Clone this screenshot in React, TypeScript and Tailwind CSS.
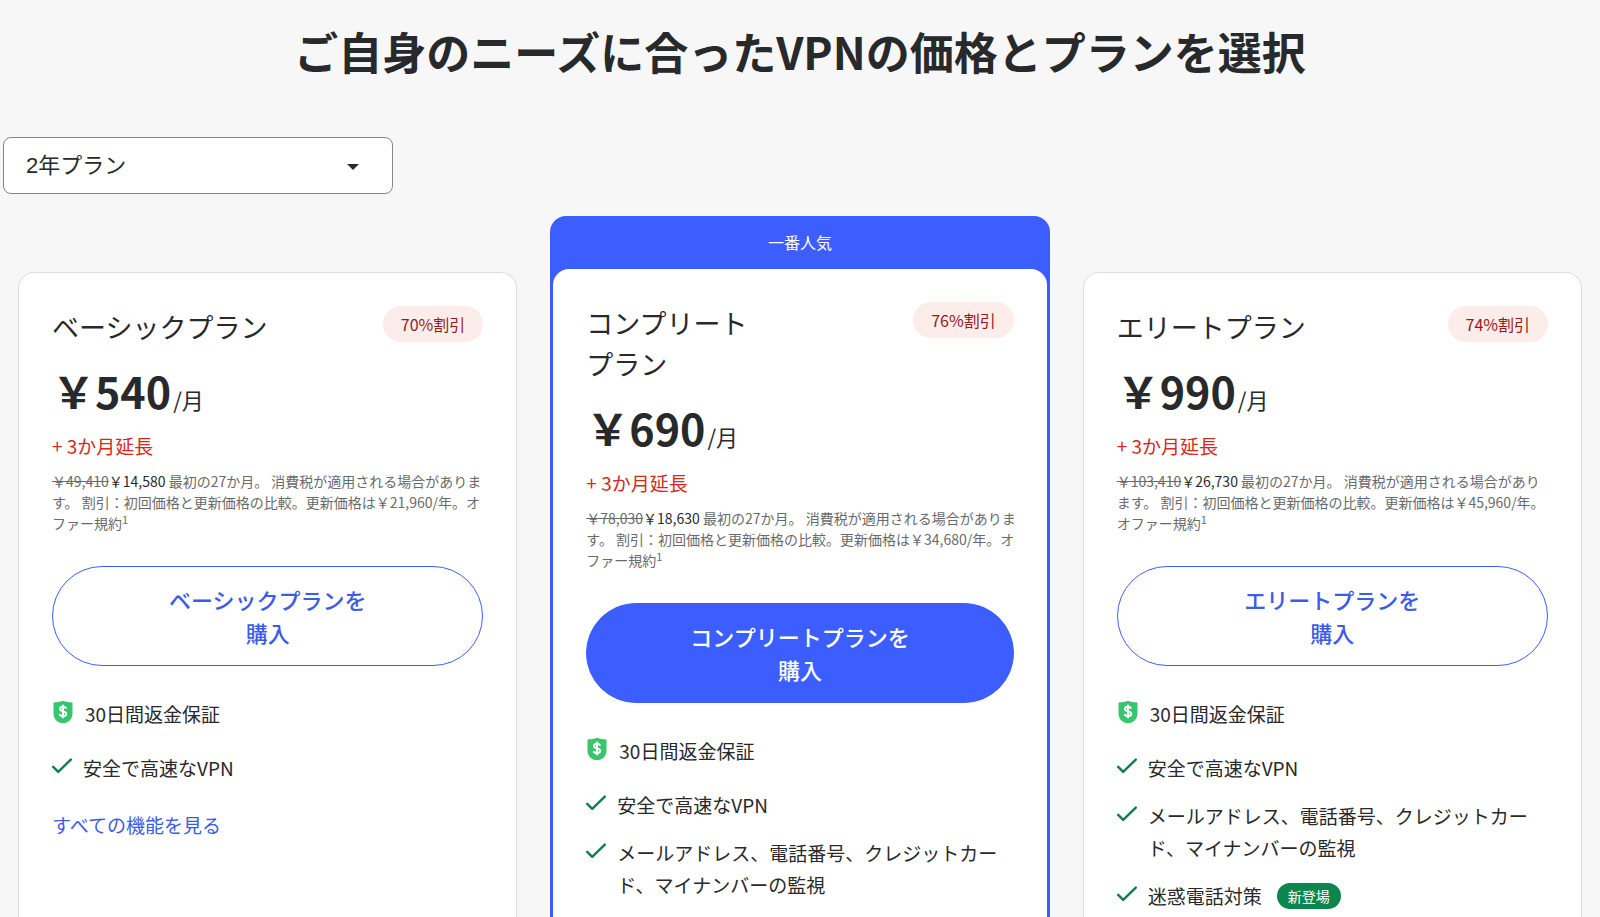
import React from 'react'

type Plan = {
  name: string[]
  discount: string
  price: string
  oldTotal: string
  total: string
  renewal: string
  cta: string
  features: { text: string; isNew?: boolean }[]
  popular?: boolean
  showAll?: boolean
}

const plans: Plan[] = [
  {
    name: ['ベーシックプラン'],
    discount: '70%割引',
    price: '￥540',
    oldTotal: '￥49,410',
    total: '￥14,580',
    renewal: '￥21,960',
    cta: 'ベーシックプランを',
    features: [{ text: '安全で高速なVPN' }],
    showAll: true,
  },
  {
    name: ['コンプリート', 'プラン'],
    discount: '76%割引',
    price: '￥690',
    oldTotal: '￥78,030',
    total: '￥18,630',
    renewal: '￥34,680',
    cta: 'コンプリートプランを',
    features: [
      { text: '安全で高速なVPN' },
      { text: 'メールアドレス、電話番号、クレジットカード、マイナンバーの監視' },
    ],
    popular: true,
  },
  {
    name: ['エリートプラン'],
    discount: '74%割引',
    price: '￥990',
    oldTotal: '￥103,410',
    total: '￥26,730',
    renewal: '￥45,960',
    cta: 'エリートプランを',
    features: [
      { text: '安全で高速なVPN' },
      { text: 'メールアドレス、電話番号、クレジットカード、マイナンバーの監視' },
      { text: '迷惑電話対策', isNew: true },
    ],
  },
]

function ShieldIcon() {
  return (
    <svg className="mt-0.5 h-6 w-[22px] shrink-0" viewBox="0 0 22 24" aria-hidden="true">
      <path d="M11 .8c2.800 1 5.800 1.600 9.500 1.700v11c0 5.600-4.200 9.700-9.500 9.700s-9.500-4.100-9.500-9.700v-11C5.200 2.400 8.200 1.800 11 .8z" fill="#39c56d" />
      <path
        d="M14 8.700c-.3-1.300-1.500-2-3-2-1.700 0-3 .8-3 2.300 0 3.300 6.200 1.500 6.200 4.800 0 1.500-1.400 2.400-3.200 2.400-1.700 0-3-.8-3.300-2.200M11 4.800v13.400"
        fill="none"
        stroke="#fff"
        strokeWidth="2"
      />
    </svg>
  )
}

function CheckIcon() {
  return (
    <svg className="mt-1.5 h-4 w-5 shrink-0" viewBox="0 0 20 16" aria-hidden="true">
      <path d="M1.200 8.800l5 5L18.800 1.600" fill="none" stroke="#0f7f4b" strokeWidth="2.400" strokeLinecap="round" strokeLinejoin="round" />
    </svg>
  )
}

function PlanBody({ plan }: { plan: Plan }) {
  return (
    <>
      <div className="flex items-start justify-between">
        <h2 className="text-[27px] leading-[41px]">
          {plan.name.map((line) => (
            <span key={line} className="block">{line}</span>
          ))}
        </h2>
        <span className="rounded-full bg-[#fcecea] px-[18px] text-base leading-9 text-[#951b1e]">
          {plan.discount}
        </span>
      </div>

      <p className="mt-2.5 flex items-baseline gap-0.5 leading-[66px]">
        <span className="text-[43px] font-bold">{plan.price}</span>
        <span className="text-[22px]">/月</span>
      </p>
      <p className="text-[19px] leading-7 text-[#d42a1e]">+ 3か月延長</p>
      <p className="-mr-1 mt-[11px] text-sm leading-[21px] text-[#6a6a6c]">
        <s>{plan.oldTotal}</s>
        <span className="text-[#28292b]">{plan.total}</span>
        {` 最初の27か月。 消費税が適用される場合があります。 割引：初回価格と更新価格の比較。更新価格は${plan.renewal}/年。オファー規約`}
        <sup className="text-[11px]">1</sup>
      </p>

      <button
        className={
          'mt-8 w-full rounded-full border py-4 text-[22px] font-medium leading-[33px] border-[#3d5eff] ' +
          (plan.popular ? 'bg-[#3d5eff] text-white' : 'bg-white text-[#3d5be8]')
        }
      >
        {plan.cta}
        <br />
        購入
      </button>

      <div className="mt-8 flex items-start gap-[11px] text-[19px] leading-8">
        <ShieldIcon />
        <span>30日間返金保証</span>
      </div>

      <ul className="mt-[22px] space-y-4 text-[19px] leading-8">
        {plan.features.map((feature) => (
          <li key={feature.text} className="flex items-start gap-[11px]">
            <CheckIcon />
            <span>{feature.text}</span>
            {feature.isNew && (
              <span className="ml-1 mt-[3px] rounded-full bg-[#0c854e] px-[11px] text-sm leading-[26px] text-white">
                新登場
              </span>
            )}
          </li>
        ))}
      </ul>

      {plan.showAll && (
        <a href="#features" className="mt-[25px] block text-[19px] leading-8 text-[#3d5be8]">
          すべての機能を見る
        </a>
      )}
    </>
  )
}

export default function App() {
  return (
    <main
      lang="ja"
      className="flex min-h-screen flex-col bg-[#f7f7f7] text-[#28292b] font-['Noto_Sans_CJK_JP',sans-serif]"
    >
      <h1 className="pt-[18px] text-center text-[44px] font-bold leading-[66px]">
        ご自身のニーズに合ったVPNの価格とプランを選択
      </h1>

      <div className="relative ml-[3px] mt-[53px] w-[390px]">
        <select
          aria-label="プラン期間"
          className="h-[57px] w-full appearance-none rounded-lg border border-[#868688] bg-white pl-[22px] pr-16 text-[22px] font-['Liberation_Sans','Noto_Sans_CJK_JP',sans-serif]"
        >
          <option>2年プラン</option>
        </select>
        <svg className="pointer-events-none absolute right-[34px] top-[27px] h-[6px] w-3" viewBox="0 0 12 6" aria-hidden="true">
          <path d="M0 0h12L6 6z" fill="#28292b" />
        </svg>
      </div>

      <div className="mt-[22px] grid flex-1 grid-cols-3 gap-[33px] px-[18px]">
        {plans.map((plan) =>
          plan.popular ? (
            <section key={plan.cta} className="flex flex-col rounded-t-2xl bg-[#3d5eff] px-[3px]">
              <p className="text-center text-base leading-[53px] text-white">一番人気</p>
              <div className="flex-1 rounded-t-2xl bg-white px-[33px] pt-[33px]">
                <PlanBody plan={plan} />
              </div>
            </section>
          ) : (
            <section key={plan.cta} className="mt-14 rounded-t-2xl border border-b-0 border-[#dedede] bg-white px-[33px] pt-[33px]">
              <PlanBody plan={plan} />
            </section>
          )
        )}
      </div>
    </main>
  )
}
